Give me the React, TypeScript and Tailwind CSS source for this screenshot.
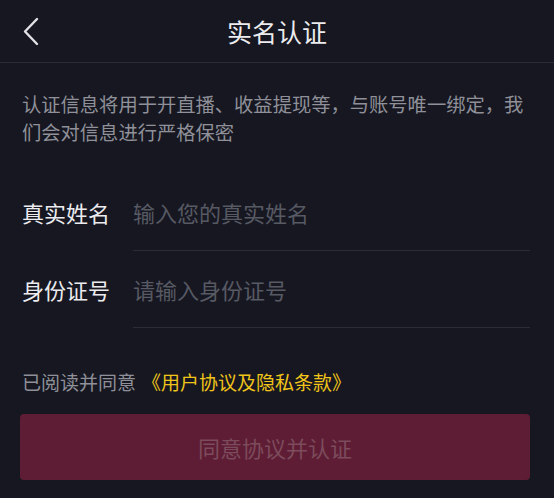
import { useState } from "react";

const FONT = "font-['Noto_Sans_CJK_SC','Noto_Sans',sans-serif]";

function BackIcon() {
  return (
    <svg width="17" height="29" viewBox="0 0 17 29" fill="none">
      <polyline
        points="15,2 3,14.5 15,27"
        stroke="#e2e2e6"
        strokeWidth="2.4"
        strokeLinecap="round"
        strokeLinejoin="round"
      />
    </svg>
  );
}

function FieldRow({
  label,
  placeholder,
  value,
  onChange,
}: {
  label: string;
  placeholder: string;
  value: string;
  onChange: (v: string) => void;
}) {
  return (
    <div className="flex h-[77px]">
      <div className="flex w-[133px] shrink-0 items-center pl-[22px] text-[22px] text-[#ececef]">
        {label}
      </div>
      <div className="mr-[24px] flex flex-1 items-center border-b border-[#2a2c36]">
        <input
          value={value}
          onChange={(e) => onChange(e.target.value)}
          placeholder={placeholder}
          className="w-full bg-transparent text-[22px] text-[#ececef] outline-none placeholder:text-[#575963]"
        />
      </div>
    </div>
  );
}

export default function App() {
  const [name, setName] = useState("");
  const [idNo, setIdNo] = useState("");

  return (
    <div className={`h-[498px] w-full overflow-hidden bg-[#161721] ${FONT}`}>
      {/* Top bar */}
      <div className="grid h-[63px] grid-cols-[64px_1fr_64px] items-center border-b border-[#2a2c36]">
        <button className="flex h-full items-center pl-[22px]">
          <BackIcon />
        </button>
        <h1 className="text-center text-[25px] leading-none text-[#ececef]">实名认证</h1>
        <div />
      </div>

      <p className="px-[22px] pt-[27px] text-[19.3px] leading-[28px] text-[#8f9098]">
        认证信息将用于开直播、收益提现等，与账号唯一绑定，我们会对信息进行严格保密
      </p>

      <div className="mt-[28px]">
        <FieldRow label="真实姓名" placeholder="输入您的真实姓名" value={name} onChange={setName} />
        <FieldRow label="身份证号" placeholder="请输入身份证号" value={idNo} onChange={setIdNo} />
      </div>

      <p className="mt-[40px] flex items-center px-[22px] text-[19px] leading-[28px] text-[#8f9098]">
        已阅读并同意
        <span className="ml-[6px] text-[#f0c419]">《用户协议及隐私条款》</span>
      </p>

      <div className="mx-[20px] mt-[18px]">
        <button className="flex h-[66px] w-[510px] items-center justify-center rounded-[4px] bg-[#5e1d34] text-[22px] text-[#7c4b5c]">
          同意协议并认证
        </button>
      </div>
    </div>
  );
}
